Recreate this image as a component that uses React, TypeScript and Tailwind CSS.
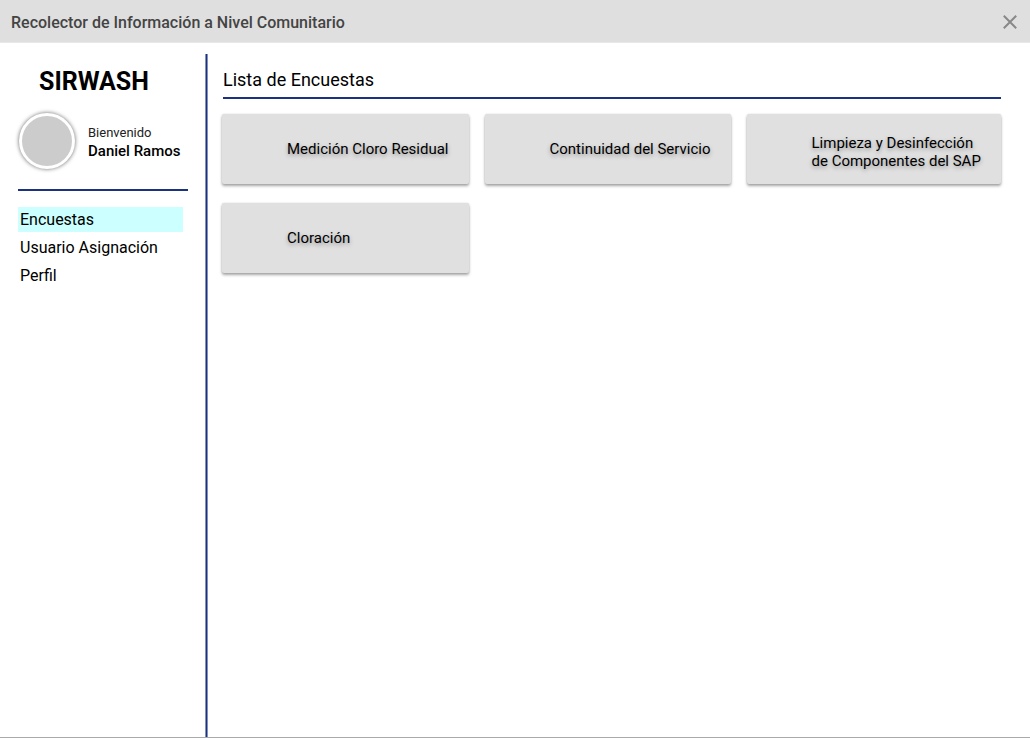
import React from "react";

const surveys: string[][] = [
  ["Medición Cloro Residual"],
  ["Continuidad del Servicio"],
  ["Limpieza y Desinfección", "de Componentes del SAP"],
  ["Cloración"],
];

const menu = ["Encuestas", "Usuario Asignación", "Perfil"];

function CloseIcon() {
  return (
    <svg width="14" height="14" viewBox="0 0 14 14" aria-hidden="true">
      <path d="M0.8 0.8L13.2 13.2M13.2 0.8L0.8 13.2" stroke="#888888" strokeWidth="2" fill="none" />
    </svg>
  );
}

export default function App() {
  return (
    <div className="flex min-h-screen flex-col border-b border-[#aaaaaa] bg-white font-['Roboto',sans-serif] text-black">
      <header className="flex h-[43px] items-center justify-between border-b border-[#e8e8e8] bg-[#dfdfdf] pl-[11px] pr-[13px] pt-[3px]">
        <h1 className="text-base font-medium text-[#444444]">Recolector de Información a Nivel Comunitario</h1>
        <button type="button" aria-label="Cerrar" className="flex pb-[2px]">
          <CloseIcon />
        </button>
      </header>

      <div className="flex flex-1 pt-[11px]">
        <aside className="w-[205px] shrink-0 pl-[18px] pr-[17px] pt-3">
          <h2 className="pl-[21px] text-[25px] leading-8 font-bold">SIRWASH</h2>
          <div className="mt-[15px] flex items-center gap-[13px]">
            <div className="ml-px size-14 shrink-0 rounded-full border-[3px] border-white bg-[#cccccc] shadow-[0_0_4px_rgba(0,0,0,0.6)]" />
            <div className="pt-[2px] whitespace-nowrap">
              <p className="text-[13px] leading-[18px] text-[#222222]">Bienvenido</p>
              <p className="text-[15px] leading-[18px] font-medium">Daniel Ramos</p>
            </div>
          </div>
          <nav className="mt-5 border-t-2 border-[#1b3281] pr-[5px] pt-4">
            <ul className="flex flex-col gap-[3px]">
              {menu.map((item, i) => (
                <li key={item}>
                  <a
                    href="#"
                    aria-current={i === 0 ? "page" : undefined}
                    className={`block px-[2px] text-base leading-[25px] ${i === 0 ? "bg-[#ccffff]" : ""}`}
                  >
                    {item}
                  </a>
                </li>
              ))}
            </ul>
          </nav>
        </aside>

        <div className="w-[3px] shrink-0 border-x border-[#8390b8] bg-[#1b3281]" />

        <main className="flex-1 pl-[15px] pr-[29px] pt-3">
          <h2 className="border-b-2 border-[#1b3281] pb-[3px] text-lg leading-7">Lista de Encuestas</h2>
          <div className="-ml-px mt-[15px] grid w-fit grid-cols-[auto_auto_auto] gap-x-4 gap-y-[19px]">
            {surveys.map((lines) => (
              <button
                key={lines[0]}
                type="button"
                className={`flex h-[70px] items-center rounded-[2px] bg-[#e0e0e0] pl-[65px] pr-5 text-left text-[15px] leading-[18px] whitespace-nowrap shadow-[0_2px_3px_rgba(0,0,0,0.35),0_0_2px_rgba(0,0,0,0.12)] [text-shadow:0_2px_4px_rgba(0,0,0,0.35)] ${lines.length > 1 ? "pt-[6px]" : ""}`}
              >
                <span>
                  {lines.map((line) => (
                    <span key={line} className="block">{line}</span>
                  ))}
                </span>
              </button>
            ))}
          </div>
        </main>
      </div>
    </div>
  );
}
